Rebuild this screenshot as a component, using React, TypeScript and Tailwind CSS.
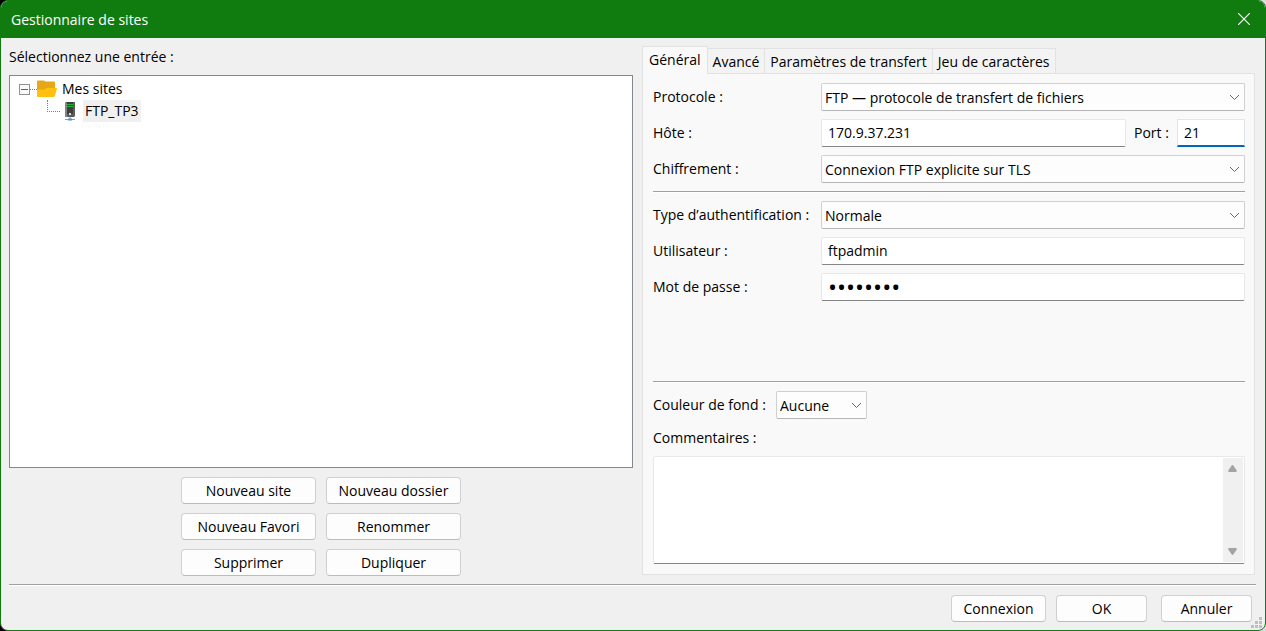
import type { ReactNode } from 'react';

const tabs = ['Général', 'Avancé', 'Paramètres de transfert', 'Jeu de caractères'];

const siteActions = [
  'Nouveau site',
  'Nouveau dossier',
  'Nouveau Favori',
  'Renommer',
  'Supprimer',
  'Dupliquer',
];

function Chevron() {
  return (
    <svg
      className="pointer-events-none absolute top-2 right-1 h-3 w-3"
      viewBox="0 0 12 12"
      fill="none"
      stroke="#666"
    >
      <path d="M1 4 5.500 8.500 10 4" />
    </svg>
  );
}

function Select({ id, options }: { id: string; options: string[] }) {
  return (
    <div className="relative w-full">
      <select
        id={id}
        className="block h-7 w-full appearance-none rounded-xs border border-[#d0d0d0] border-b-[#b5b5b5] bg-[#fdfdfd] pt-0.5 pr-5 pl-[3px] outline-none"
      >
        {options.map((option) => (
          <option key={option}>{option}</option>
        ))}
      </select>
      <Chevron />
    </div>
  );
}

const inputClass =
  'h-7 min-w-0 flex-1 rounded-xs border border-[#e8e8e8] border-b-[#858585] bg-white px-1.5 outline-none';

function Row({ id, label, children }: { id: string; label: string; children: ReactNode }) {
  return (
    <div className="flex h-7 items-center">
      <label htmlFor={id} className="w-[168px] shrink-0 whitespace-nowrap">
        {label}
      </label>
      <div className="flex min-w-0 flex-1 items-center">{children}</div>
    </div>
  );
}

function Separator() {
  return <hr className="h-0.5 shrink-0 border-t border-b border-t-[#a0a0a0] border-b-white" />;
}

function Button({ children, className }: { children: ReactNode; className: string }) {
  return (
    <button
      type="button"
      className={`h-[27px] rounded border border-[#d0d0d0] border-b-[#bcbcbc] bg-[#fdfdfd] ${className}`}
    >
      {children}
    </button>
  );
}

function FolderIcon() {
  return (
    <svg className="h-[18px] w-5" viewBox="0 0 20 18">
      <path d="M0 1.500Q0 .500 1 .500H7l1.500 1H17q1 0 1 1V15H0z" fill="#e6a817" />
      <path d="M0 9.500h7.500l2-1.500h10q.700 0 .500.800l-2.200 7.200q-.3 1-1.300 1H1q-1 0-1-1z" fill="#ffc010" />
    </svg>
  );
}

function ServerIcon() {
  return (
    <svg className="h-[19px] w-[10px]" viewBox="0 0 10 19">
      <path d="M0 1 1 0h9v14l-1 1H0z" fill="#5c5c5c" />
      <path d="M2 0h6v12H2z" fill="#3f3f3f" />
      <path d="M0 1h2v14H0z" fill="#858585" />
      <path d="M2 2.500h6M2 4.500h6" stroke="#1fb53a" />
      <path d="M4 11h2v2H4z" fill="#ddd" />
      <path d="M5 15v2" stroke="#999" />
      <path d="M0 17.500h10" stroke="#9a9a9a" />
      <path d="M3 16.500h4v2H3z" fill="#4a93cf" />
    </svg>
  );
}

function SiteTree() {
  return (
    <ul className="min-h-40 flex-1 border border-[#828790] bg-white pt-0.5 pl-[9px]">
      <li>
        <div className="flex h-[22px] items-center">
          <button type="button" aria-label="Réduire Mes sites" className="h-[11px] w-[11px]">
            <svg viewBox="0 0 11 11" className="block" shapeRendering="crispEdges">
              <rect x=".5" y=".5" width="10" height="10" fill="#fafafa" stroke="#919191" />
              <path d="M2 5.500h7" stroke="#4b63a7" />
            </svg>
          </button>
          <span className="w-[7px] border-t border-dotted border-[#808080]" />
          <FolderIcon />
          <span className="pl-[5px]">Mes sites</span>
        </div>
        <ul className="pl-7">
          <li className="flex h-[22px] items-center">
            <span className="h-[12px] w-[13px] self-start border-b border-l border-dotted border-[#808080]" />
            <span className="pl-[5px]">
              <ServerIcon />
            </span>
            <span className="ml-2 flex h-[22px] items-center bg-[#f0f0f0] px-0.5">FTP_TP3</span>
          </li>
        </ul>
      </li>
    </ul>
  );
}

export default function App() {
  return (
    <div className="flex min-h-screen bg-linear-to-r from-black from-50% to-[#dcdcdc] to-50% font-['Open_Sans',sans-serif] text-sm leading-5 text-black">
      <div className="flex flex-1 flex-col overflow-hidden rounded-lg border border-[#107c10] bg-[#f0f0f0]">
        <header className="flex h-[37px] shrink-0 items-center justify-between bg-[#107c10] pr-[15px] pl-2.5 text-white">
          <h1>Gestionnaire de sites</h1>
          <button type="button" aria-label="Fermer" className="pb-0.5">
            <svg className="block h-3 w-3" viewBox="0 0 12 12" stroke="white" strokeWidth="1.200">
              <path d="m0 0 12 12M12 0 0 12" />
            </svg>
          </button>
        </header>

        <main className="grid flex-1 grid-cols-[624fr_613fr] gap-[9px] pr-2.5 pl-2">
          <section className="flex min-w-0 flex-col gap-2 pt-[9px]">
            <h2>Sélectionnez une entrée :</h2>
            <SiteTree />
            <div className="grid grid-cols-[135px_135px] justify-center gap-x-2.5 gap-y-[9px] pt-px">
              {siteActions.map((action) => (
                <Button key={action} className="w-full">
                  {action}
                </Button>
              ))}
            </div>
          </section>

          <section className="flex min-w-0 flex-col pt-2 pb-px">
            <div role="tablist" className="relative z-10 -mb-px flex items-end">
              {tabs.map((tab, index) => (
                <button
                  key={tab}
                  type="button"
                  role="tab"
                  aria-selected={index === 0}
                  className={
                    index === 0
                      ? 'h-7 border border-b-0 border-[#e2e2e2] bg-[#f9f9f9] px-1.5 pb-px'
                      : 'h-[26px] border border-l-0 border-[#e2e2e2] bg-[#f3f3f3] px-[5px] pt-0.5'
                  }
                >
                  {tab}
                </button>
              ))}
            </div>
            <form className="flex flex-1 flex-col gap-2 border border-[#e2e2e2] bg-[#f9f9f9] pt-[9px] pr-[9px] pb-2.5 pl-2.5">
              <Row id="protocol" label="Protocole :">
                <Select id="protocol" options={['FTP — protocole de transfert de fichiers']} />
              </Row>
              <Row id="host" label="Hôte :">
                <input id="host" className={`${inputClass} pb-0.5`} defaultValue="170.9.37.231" />
                <label htmlFor="port" className="w-[51px] pl-2">
                  Port :
                </label>
                <input
                  id="port"
                  className="h-7 w-[68px] border border-b-2 border-[#e0e6ec] border-b-[#0067c0] bg-white px-1.5 outline-none"
                  defaultValue="21"
                />
              </Row>
              <Row id="encryption" label="Chiffrement :">
                <Select id="encryption" options={['Connexion FTP explicite sur TLS']} />
              </Row>
              <Separator />
              <Row id="auth" label="Type d’authentification :">
                <Select id="auth" options={['Normale']} />
              </Row>
              <Row id="user" label="Utilisateur :">
                <input id="user" className={`${inputClass} pb-0.5`} defaultValue="ftpadmin" />
              </Row>
              <Row id="password" label="Mot de passe :">
                <input
                  id="password"
                  type="password"
                  className={`${inputClass} text-2xl`}
                  defaultValue="ftpadmin"
                />
              </Row>
              <div className="mt-auto" />
              <Separator />
              <div className="flex h-7 items-center">
                <label htmlFor="color" className="w-[123px] whitespace-nowrap">
                  Couleur de fond :
                </label>
                <div className="w-[91px]">
                  <Select id="color" options={['Aucune']} />
                </div>
              </div>
              <label htmlFor="comments" className="h-[21px] pt-px">
                Commentaires :
              </label>
              <div className="flex h-[108px] rounded-xs border border-[#e8e8e8] border-b-[#858585] bg-white">
                <textarea id="comments" className="min-w-0 flex-1 resize-none px-1.5 outline-none" />
                <div className="my-px mr-px flex w-5 flex-col items-center justify-between bg-[#f0f0f0] py-[7px] pr-0.5">
                  <button type="button" aria-label="Défiler vers le haut">
                    <svg className="block h-[7px] w-[9px]" viewBox="0 0 9 7">
                      <path d="M3.700.500q.800-.800 1.600 0L8.700 5.500q.300 1.500-.700 1.500H1Q0 7 .300 5.500z" fill="#a3a3a3" />
                    </svg>
                  </button>
                  <button type="button" aria-label="Défiler vers le bas">
                    <svg className="block h-[7px] w-[9px] rotate-180" viewBox="0 0 9 7">
                      <path d="M3.700.500q.800-.800 1.600 0L8.700 5.500q.300 1.500-.700 1.500H1Q0 7 .300 5.500z" fill="#a3a3a3" />
                    </svg>
                  </button>
                </div>
              </div>
            </form>
          </section>
        </main>

        <footer className="relative pt-2 pr-[9px] pb-2 pl-2">
          <Separator />
          <div className="flex justify-end gap-2.5 pt-[9px] pr-1">
            <Button className="w-[95px]">Connexion</Button>
            <Button className="w-[91px]">OK</Button>
            <Button className="ml-1 w-[91px]">Annuler</Button>
          </div>
          <svg
            className="absolute right-[3px] bottom-0.5 h-[11px] w-[11px]"
            viewBox="0 0 11 11"
            fill="#bfbfbf"
            shapeRendering="crispEdges"
          >
            <path d="M8 0h3v3H8zM8 4h3v3H8zM4 4h3v3H4zM8 8h3v3H8zM4 8h3v3H4zM0 8h3v3H0z" />
          </svg>
        </footer>
      </div>
    </div>
  );
}
